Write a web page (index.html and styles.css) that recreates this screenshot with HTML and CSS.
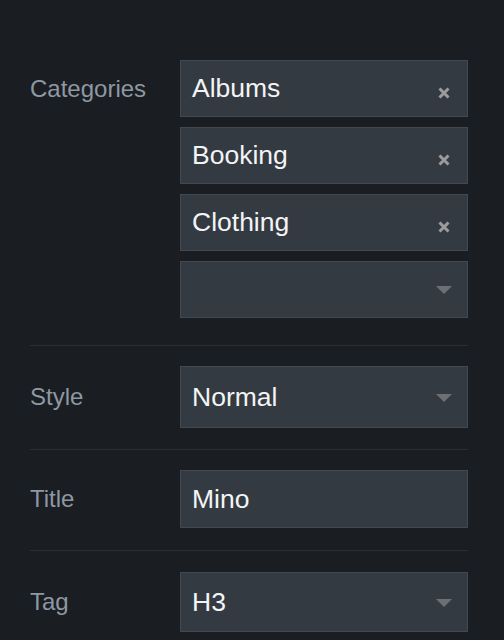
FILE: index.html
```html
<!DOCTYPE html>
<html lang="en">
<head>
<meta charset="utf-8">
<title>Settings</title>
<link rel="stylesheet" href="styles.css">
</head>
<body>
<div class="panel">
  <div class="row row--multi">
    <div class="label">Categories</div>
    <div class="fields">
      <div class="box box--tag"><span class="value">Albums</span><svg class="remove" viewBox="0 0 14 14" width="14" height="14"><path d="M2.5 2.5 L11.5 11.5 M11.5 2.5 L2.5 11.5"/></svg></div>
      <div class="box box--tag"><span class="value">Booking</span><svg class="remove" viewBox="0 0 14 14" width="14" height="14"><path d="M2.5 2.5 L11.5 11.5 M11.5 2.5 L2.5 11.5"/></svg></div>
      <div class="box box--tag"><span class="value">Clothing</span><svg class="remove" viewBox="0 0 14 14" width="14" height="14"><path d="M2.5 2.5 L11.5 11.5 M11.5 2.5 L2.5 11.5"/></svg></div>
      <div class="box box--tag"><span class="value"></span><span class="caret"></span></div>
    </div>
  </div>
  <div class="row">
    <div class="label">Style</div>
    <div class="box box--style"><span class="value">Normal</span><span class="caret"></span></div>
  </div>
  <div class="row row--title">
    <div class="label">Title</div>
    <div class="box box--title"><span class="value">Mino</span></div>
  </div>
  <div class="row row--last">
    <div class="label">Tag</div>
    <div class="box box--tagsel"><span class="value">H3</span><span class="caret"></span></div>
  </div>
</div>
</body>
</html>
```
FILE: styles.css
```css
html, body {
  margin: 0;
  padding: 0;
  background: #1a1d21;
  height: 100%;
}

body {
  font-family: "Liberation Sans", Arial, sans-serif;
  overflow: hidden;
}

.panel {
  padding: 60px 36px 0 30px;
}

.row {
  display: flex;
  align-items: center;
  border-top: 1px solid #2b2f34;
  padding: 20px 0 21px;
}

.row--multi {
  align-items: flex-start;
  border-top: none;
  padding: 0 0 27px;
}

.row--title {
  padding-bottom: 22px;
}

.row--last {
  padding-top: 21px;
}

.label {
  width: 150px;
  flex: none;
  font-size: 24px;
  color: #8e98a3;
}

.row--multi .label {
  height: 57px;
  display: flex;
  align-items: center;
}

.fields {
  flex: 1;
  display: flex;
  flex-direction: column;
  gap: 10px;
}

.box {
  flex: 1;
  box-sizing: border-box;
  display: flex;
  align-items: center;
  background: #343a41;
  border: 1px solid #42484f;
  padding: 0 15px 0 11px;
}

.fields .box {
  flex: none;
}

.box--tag { height: 57px; }
.box--style { height: 62px; }
.box--title { height: 58px; }
.box--tagsel { height: 60px; }

.value {
  flex: 1;
  font-size: 26.5px;
  color: #f3f4f5;
}

.remove {
  flex: none;
  margin-top: 8px;
  margin-right: 1px;
  stroke: #9b9c9e;
  stroke-width: 3;
  fill: none;
}

.caret {
  flex: none;
  width: 0;
  height: 0;
  border-left: 8px solid transparent;
  border-right: 8px solid transparent;
  border-top: 8px solid #6c7075;
  margin-top: 1px;
}
```
